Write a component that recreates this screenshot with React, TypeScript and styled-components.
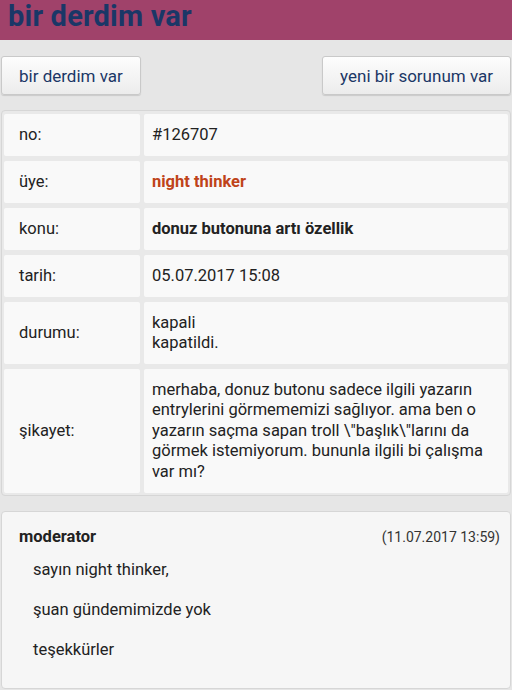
import React from "react";
import styled, { createGlobalStyle } from "styled-components";

const Global = createGlobalStyle`
  html, body { margin: 0; padding: 0; background: #e6e6e6; }
  body { font-family: Roboto, "Noto Sans", Arial, sans-serif; color: #222; }
  * { box-sizing: border-box; }
`;

const Page = styled.div`
  width: 512px;
  min-height: 690px;
  background: #e6e6e6;
`;

const Header = styled.header`
  height: 40px;
  background: #a0426a;
  padding: 0 8px;
  overflow: hidden;
`;

const Title = styled.h1`
  margin: 0;
  font-size: 29px;
  font-weight: 700;
  color: #1a3767;
  line-height: 33px;
  letter-spacing: 0.2px;
`;

const Actions = styled.div`
  display: flex;
  justify-content: space-between;
  padding: 16px 1px 15px 1px;
`;

const Button = styled.button`
  height: 39px;
  padding: 0 17px;
  font-family: inherit;
  font-size: 17px;
  color: #1b3766;
  background: linear-gradient(#fdfdfd, #ececec);
  border: 1px solid #c9c9c9;
  border-radius: 3px;
  box-shadow: 0 1px 1px rgba(0, 0, 0, 0.12);
`;

const Card = styled.div`
  margin: 0 1px;
  background: #e9e9e9;
  border: 1px solid #d6d6d6;
  border-radius: 4px;
  padding: 3px 2px 2px 2px;
`;

const Grid = styled.div`
  display: grid;
  grid-template-columns: 136px 1fr;
  gap: 5px 4px;
`;

const Cell = styled.div<{ $label?: boolean }>`
  background: #f9f9f9;
  border-radius: 2px;
  min-height: 42px;
  padding: ${(p) => (p.$label ? "10.5px 15px" : "10.5px 8px")};
  font-size: 16.5px;
  line-height: 20.5px;
  color: #222;
  display: flex;
  flex-direction: column;
  justify-content: center;
`;

const Value = styled.span<{ $tone?: "user" | "bold" }>`
  font-weight: ${(p) => (p.$tone ? 700 : 400)};
  color: ${(p) => (p.$tone === "user" ? "#bf4319" : "#222")};
`;

const Reply = styled.div`
  margin: 15px 1px 0 1px;
  background: #f6f6f6;
  border: 1px solid #d6d6d6;
  border-radius: 4px;
  padding: 15px 10px 28px 17px;
`;

const ReplyHead = styled.div`
  display: flex;
  justify-content: space-between;
  align-items: baseline;
`;

const Author = styled.span`
  font-weight: 700;
  font-size: 16.5px;
`;

const Stamp = styled.span`
  font-size: 14px;
  color: #333;
`;

const Para = styled.p`
  margin: 13px 0 0 14px;
  font-size: 16.5px;
  line-height: 21px;
  & + & { margin-top: 19px; }
`;

const rows: { label: string; value: React.ReactNode }[] = [
  { label: "no:", value: <Value>#126707</Value> },
  { label: "üye:", value: <Value $tone="user">night thinker</Value> },
  { label: "konu:", value: <Value $tone="bold">donuz butonuna artı özellik</Value> },
  { label: "tarih:", value: <Value>05.07.2017 15:08</Value> },
  {
    label: "durumu:",
    value: (
      <>
        <Value>kapali</Value>
        <Value>kapatildi.</Value>
      </>
    ),
  },
  {
    label: "şikayet:",
    value: (
      <Value>
        merhaba, donuz butonu sadece ilgili yazarın entrylerini görmememizi sağlıyor. ama ben o
        yazarın saçma sapan troll \"başlık\"larını da görmek istemiyorum. bununla ilgili bi çalışma
        var mı?
      </Value>
    ),
  },
];

export default function App() {
  return (
    <Page>
      <Global />
      <Header>
        <Title>bir derdim var</Title>
      </Header>
      <Actions>
        <Button>bir derdim var</Button>
        <Button>yeni bir sorunum var</Button>
      </Actions>
      <Card>
        <Grid>
          {rows.map((r) => (
            <React.Fragment key={r.label}>
              <Cell $label>{r.label}</Cell>
              <Cell>{r.value}</Cell>
            </React.Fragment>
          ))}
        </Grid>
      </Card>
      <Reply>
        <ReplyHead>
          <Author>moderator</Author>
          <Stamp>(11.07.2017 13:59)</Stamp>
        </ReplyHead>
        <Para>sayın night thinker,</Para>
        <Para>şuan gündemimizde yok</Para>
        <Para>teşekkürler</Para>
      </Reply>
    </Page>
  );
}
